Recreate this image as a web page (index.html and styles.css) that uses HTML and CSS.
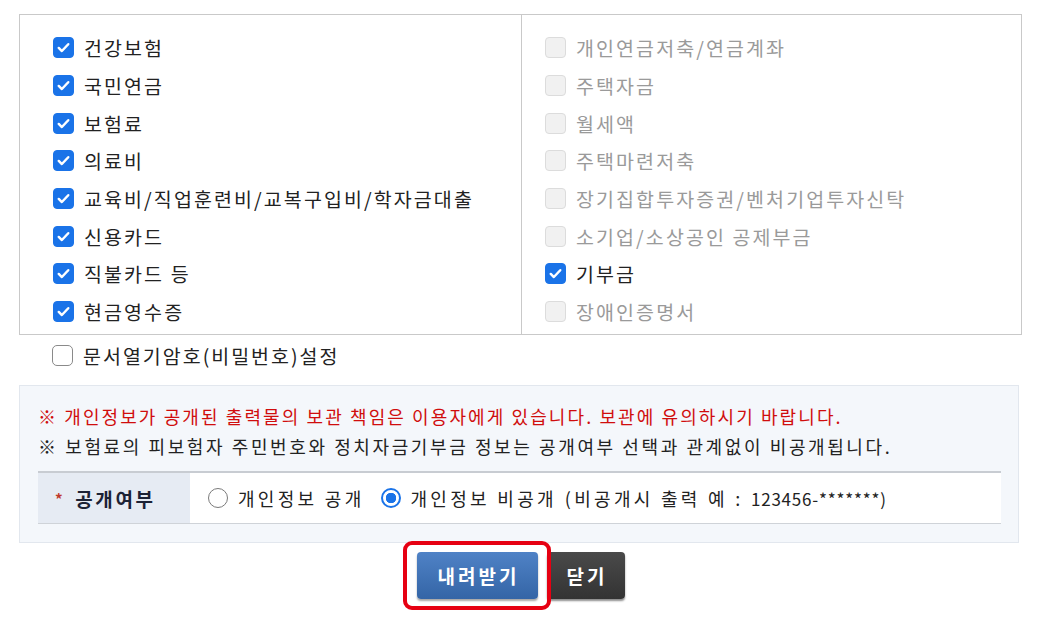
FILE: index.html
```
<!DOCTYPE html>
<html>
  <head>
    <meta charset="utf-8">
    <title>내려받기</title>
    <link rel="stylesheet" href="styles.css">
  </head>
  <body>
    <div id="wrap">

      <div class="items">
        <ul class="col">
          <li><span class="box on"><svg viewBox="0 0 20 20"><path d="M5 10.5l3.3 3.2L15 6.6"/></svg></span>건강보험</li>
          <li><span class="box on"><svg viewBox="0 0 20 20"><path d="M5 10.5l3.3 3.2L15 6.6"/></svg></span>국민연금</li>
          <li><span class="box on"><svg viewBox="0 0 20 20"><path d="M5 10.5l3.3 3.2L15 6.6"/></svg></span>보험료</li>
          <li><span class="box on"><svg viewBox="0 0 20 20"><path d="M5 10.5l3.3 3.2L15 6.6"/></svg></span>의료비</li>
          <li><span class="box on"><svg viewBox="0 0 20 20"><path d="M5 10.5l3.3 3.2L15 6.6"/></svg></span>교육비/직업훈련비/교복구입비/학자금대출</li>
          <li><span class="box on"><svg viewBox="0 0 20 20"><path d="M5 10.5l3.3 3.2L15 6.6"/></svg></span>신용카드</li>
          <li><span class="box on"><svg viewBox="0 0 20 20"><path d="M5 10.5l3.3 3.2L15 6.6"/></svg></span>직불카드 등</li>
          <li><span class="box on"><svg viewBox="0 0 20 20"><path d="M5 10.5l3.3 3.2L15 6.6"/></svg></span>현금영수증</li>
        </ul>
        <ul class="col right">
          <li class="off"><span class="box"></span>개인연금저축/연금계좌</li>
          <li class="off"><span class="box"></span>주택자금</li>
          <li class="off"><span class="box"></span>월세액</li>
          <li class="off"><span class="box"></span>주택마련저축</li>
          <li class="off"><span class="box"></span>장기집합투자증권/벤처기업투자신탁</li>
          <li class="off"><span class="box"></span>소기업/소상공인 공제부금</li>
          <li><span class="box on"><svg viewBox="0 0 20 20"><path d="M5 10.5l3.3 3.2L15 6.6"/></svg></span>기부금</li>
          <li class="off"><span class="box"></span>장애인증명서</li>
        </ul>
      </div>

      <div class="pw"><span class="box empty"></span>문서열기암호(비밀번호)설정</div>

      <div class="notice">
        <p class="warn">※ 개인정보가 공개된 출력물의 보관 책임은 이용자에게 있습니다. 보관에 유의하시기 바랍니다.</p>
        <p class="info">※ 보험료의 피보험자 주민번호와 정치자금기부금 정보는 공개여부 선택과 관계없이 비공개됩니다.</p>
        <div class="row">
          <div class="th"><span class="star">*</span>공개여부</div>
          <div class="td">
            <span class="radio"></span>개인정보 공개
            <span class="radio sel"></span>개인정보 비공개 <span class="ex">(비공개시 출력 예 : <span class="num">123456-*******)</span></span>
          </div>
        </div>
      </div>

      <div class="btns">
        <div class="mark">
          <button type="button" class="btn blue">내려받기</button>
        </div>
        <button type="button" class="btn dark">닫기</button>
      </div>

    </div>
  </body>
</html>
```

FILE: styles.css
```
body { margin: 0; background: #fff; font-family: "Noto Sans CJK KR", "Noto Sans", sans-serif; color: #222; }

#wrap { width: 1003px; padding: 14px 0 31px 19px; }

/* checkbox list */
.items { display: flex; border: 1px solid #c9c9c9; height: 321px; box-sizing: border-box; }
.col { list-style: none; margin: 0; padding: 14px 0 0 33px; width: 502px; box-sizing: border-box; border-right: 1px solid #c9c9c9; }
.col.right { padding-left: 23px; border-right: none; flex: 1; }
.col li { display: flex; align-items: center; height: 37.7px; font-size: 19.5px; letter-spacing: 2.1px; }
.col li.off { color: #9a9a9a; }

.box { display: inline-block; width: 21px; height: 21px; box-sizing: border-box; border-radius: 4px; margin-right: 10px; flex-shrink: 0; background: #f1f1f1; border: 1px solid #dcdcdc; }
.box.on { background: #1a73e8; border-color: #1a73e8; }
.box.on svg { display: block; width: 19px; height: 19px; fill: none; stroke: #fff; stroke-width: 2.6; stroke-linecap: round; stroke-linejoin: round; }
.box.empty { background: #fff; border: 1.5px solid #8a8a8a; border-radius: 5px; }

.pw { display: flex; align-items: center; height: 41px; padding-left: 33px; font-size: 19.5px; letter-spacing: 2px; }

/* notice area */
.notice { margin-top: 9px; width: 1000px; box-sizing: border-box; background: #f4f7fb; border: 1px solid #e2e7ee; padding: 15px 17px 18px 18px; }
.notice p { margin: 0; font-size: 18px; line-height: 30px; letter-spacing: 2.1px; }
.notice p.warn { color: #d00d0d; }
.notice p.info { letter-spacing: 2.6px; }

.row { display: flex; margin-top: 10px; height: 53px; border-top: 2px solid #c8ccd2; border-bottom: 1px solid #cfd3d8; box-sizing: border-box; background: #fff; }
.th { width: 152px; background: #e6ebf3; display: flex; align-items: center; padding-left: 17px; box-sizing: border-box; font-size: 19px; font-weight: bold; letter-spacing: 2.6px; color: #1c2235; }
.star { color: #c0392b; font-size: 15px; margin-right: 10px; }
.td { display: flex; align-items: center; padding-left: 18px; font-size: 18px; letter-spacing: 3.3px; color: #222; }
.ex { margin-left: 8px; white-space: pre; }
.num { letter-spacing: 0.8px; font-size: 17px; }

.radio { display: inline-block; width: 20px; height: 20px; box-sizing: border-box; border-radius: 50%; border: 1.5px solid #7a7a7a; background: #fff; margin-right: 10px; }
.radio.sel { border: 2px solid #1a73e8; background: radial-gradient(circle, #1a73e8 0 5px, #fff 5.5px); margin-left: 16px; }

/* buttons */
.btns { display: flex; justify-content: center; gap: 9px; margin-top: 9px; }
.mark { position: relative; }
.mark::after { content: ""; position: absolute; left: -14px; top: -11px; right: -13px; bottom: -11px; border: 4px solid #e60012; border-radius: 9px; }
.btn { height: 47px; border: none; border-radius: 4px; color: #fff; font-family: "Noto Sans CJK KR", sans-serif; font-size: 19px; font-weight: bold; letter-spacing: 3px; padding: 0 0 0 3px; cursor: pointer; }
.btn.blue { width: 121px; background: linear-gradient(#4f82c6, #3465a6); box-shadow: 0 2px 2px rgba(0,0,0,0.35); }
.btn.dark { width: 78px; background: linear-gradient(#4a4a4a, #333); box-shadow: 0 2px 2px rgba(0,0,0,0.45); }
```
